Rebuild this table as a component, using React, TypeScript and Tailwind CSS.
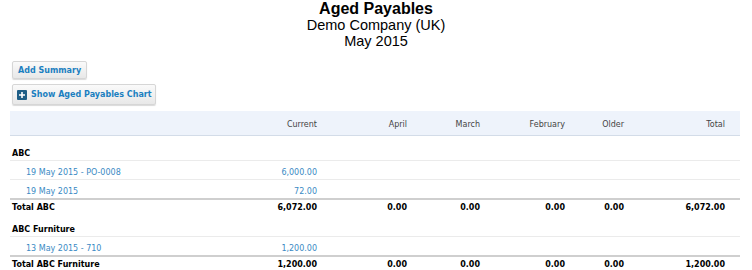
import React from "react";

const COLS = "grid grid-cols-[227px_80px_90px_73px_85px_59px_101px_15px]";
const FONT = "font-['DejaVu_Sans',Tahoma,sans-serif]";

const GROUPS = [
  {
    name: "ABC",
    rows: [
      { label: "19 May 2015 - PO-0008", current: "6,000.00" },
      { label: "19 May 2015", current: "72.00" }
    ],
    total: "6,072.00",
    top: "pt-[13px]"
  },
  {
    name: "ABC Furniture",
    rows: [{ label: "13 May 2015 - 710", current: "1,200.00" }],
    total: "1,200.00",
    top: "pt-[12px]"
  }
];

const MONTHS = ["April", "March", "February", "Older"];

export default function App() {
  return (
    <div className={`w-[752px] h-[270px] overflow-hidden bg-white ${FONT}`}>
      {/* Title */}
      <div className="text-center font-['Liberation_Sans',Arial,sans-serif] text-black">
        <div className="text-[16px] leading-[17px] font-bold">Aged Payables</div>
        <div className="text-[14.5px] leading-[16px]">Demo Company (UK)</div>
        <div className="text-[14.5px] leading-[16px]">May 2015</div>
      </div>

      {/* Buttons */}
      <div className="mt-[12px] flex flex-col items-start gap-[5px] pl-[12px]">
        <button className="h-[18px] rounded-[2px] border border-[#d6d6d6] bg-gradient-to-b from-[#fafafa] to-[#e8e8e8] px-[5px] text-[8px] leading-[15px] font-bold text-[#1b7fc0] shadow-[0_1px_1px_rgba(0,0,0,0.15)]">
          Add Summary
        </button>
        <button className="flex h-[21px] items-center gap-[4px] rounded-[2px] border border-[#d6d6d6] bg-gradient-to-b from-[#fafafa] to-[#e8e8e8] pr-[3px] pl-[4px] text-[8px] font-bold text-[#1b7fc0] shadow-[0_1px_1px_rgba(0,0,0,0.15)]">
          <span className="flex h-[10px] w-[10px] items-center justify-center rounded-[1px] bg-[#1e5e86]">
            <svg width="8" height="8" viewBox="0 0 8 8">
              <path d="M4 1v6M1 4h6" stroke="white" strokeWidth="1.6" />
            </svg>
          </span>
          Show Aged Payables Chart
        </button>
      </div>

      {/* Table */}
      <div className="mt-[6px] ml-[10px] w-[730px] text-[8px] leading-[10px]">
        <div className={`${COLS} h-[25px] border-b border-[#d3dce8] bg-[#eef3fb] pt-[9px] text-[#444]`}>
          <div />
          <div className="text-right">Current</div>
          {MONTHS.map((m) => (
            <div key={m} className="text-right">
              {m}
            </div>
          ))}
          <div className="text-right">Total</div>
          <div />
        </div>

        {GROUPS.map((g) => (
          <div key={g.name}>
            <div className={`${g.top} border-b border-[#ebebeb] pb-[1px] pl-[2px] font-bold text-black`}>
              {g.name}
            </div>
            {g.rows.map((r, ri) => (
              <div
                key={r.label}
                className={`${COLS} pt-[7px] pb-[1px] text-[#3a8ac4] ${
                  ri === g.rows.length - 1 ? "border-b-2 border-[#cfcfcf]" : "border-b border-[#ebebeb]"
                }`}>
                <div className="pl-[16px]">{r.label}</div>
                <div className="text-right">{r.current}</div>
              </div>
            ))}
            <div className={`${COLS} pt-[3px] font-bold text-black`}>
              <div className="pl-[2px]">Total {g.name}</div>
              <div className="text-right">{g.total}</div>
              {MONTHS.map((m) => (
                <div key={m} className="text-right">
                  0.00
                </div>
              ))}
              <div className="text-right">{g.total}</div>
              <div />
            </div>
          </div>
        ))}
      </div>
    </div>
  );
}
